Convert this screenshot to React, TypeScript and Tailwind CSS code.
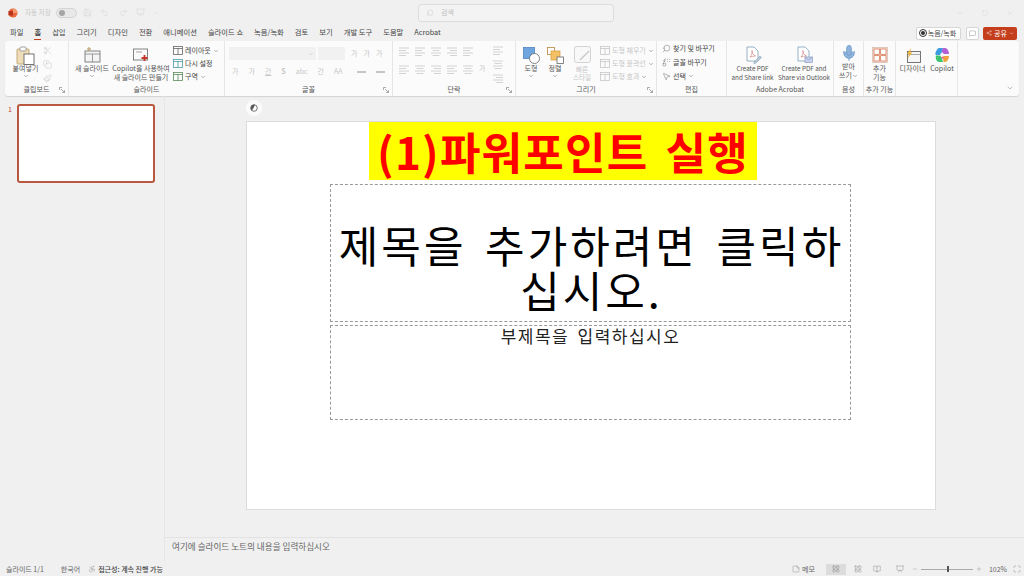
import type { ReactNode } from 'react'
import { ChevronDown, Minus, Plus, Search, Scissors, Copy, Paintbrush, X, Square, MousePointer2, Replace, MessageSquare, Share2, Mic, Undo2, Redo2, Save, Presentation, Accessibility, StickyNote, LayoutGrid, BookOpen, Maximize } from 'lucide-react'

const tabs = ['파일', '홈', '삽입', '그리기', '디자인', '전환', '애니메이션', '슬라이드 쇼', '녹음/녹화', '검토', '보기', '개발 도구', '도움말', 'Acrobat']

function Caret({ className = '' }: { className?: string }) {
  return <ChevronDown size={6} strokeWidth={2} className={`text-[#666] ${className}`} />
}

function Launcher() {
  return (
    <svg width="6" height="6" viewBox="0 0 6 6" className="text-[#888]" fill="none" stroke="currentColor" strokeWidth="0.7">
      <path d="M0.5 3V0.5H3M2 2L5.5 5.5M5.5 3.2V5.5H3.2" />
    </svg>
  )
}

function Group({ width, label, launcher, children, last }: { width: number; label: string; launcher?: boolean; children: ReactNode; last?: boolean }) {
  return (
    <div style={{ width }} className={`relative flex shrink-0 flex-col ${last ? '' : 'border-r border-[#e6e6e6]'}`}>
      <div className="flex min-h-0 flex-1">{children}</div>
      <div className="flex h-[13px] items-center justify-center pb-[1px] text-[7px] leading-none text-[#555]">{label}</div>
      {launcher && (
        <div className="absolute bottom-[3px] right-[3px]">
          <Launcher />
        </div>
      )}
    </div>
  )
}

function SmallRow({ icon, text, muted, caret }: { icon: ReactNode; text: string; muted?: boolean; caret?: boolean }) {
  return (
    <div className={`flex h-[14px] items-center gap-[2px] whitespace-nowrap text-[7px] leading-none ${muted ? 'text-[#c6c6c6]' : 'text-[#444]'}`}>
      {icon}
      <span>{text}</span>
      {caret && <Caret />}
    </div>
  )
}

function LayoutIcon({ color = '#666' }: { color?: string }) {
  return (
    <svg width="10" height="9" viewBox="0 0 10 9" fill="none" stroke={color} strokeWidth="0.8">
      <rect x="0.5" y="0.5" width="9" height="8" />
      <path d="M0.5 2.5H9.5M5 2.5V8.5" />
    </svg>
  )
}

function FakeGlyph({ text, className = '' }: { text: string; className?: string }) {
  return <span className={`text-[7px] leading-none text-[#c6c6c6] ${className}`}>{text}</span>
}

function LineIcon({ align = 'left' }: { align?: 'left' | 'center' | 'right' }) {
  const d = align === 'left' ? 'M0 1H10M0 3.5H7M0 6H10M0 8.5H7' : align === 'center' ? 'M0 1H10M1.5 3.5H8.5M0 6H10M1.5 8.5H8.5' : 'M0 1H10M3 3.5H10M0 6H10M3 8.5H10'
  return (
    <svg width="10" height="9" viewBox="0 0 10 9" fill="none" stroke="#c9c9c9" strokeWidth="0.8">
      <path d={d} />
    </svg>
  )
}

function PdfIcon({ mail }: { mail?: boolean }) {
  return (
    <svg width="18" height="18" viewBox="0 0 18 18" fill="none">
      <path d="M3 1H10L14 5V15H3Z" fill="#fff" stroke="#7f9fb8" strokeWidth="0.8" />
      <path d="M6 11C8 9 8.5 6 8 4.5C7.5 6 9 9 11.5 10C9.5 10 7.5 10.5 6 11Z" stroke="#c25b5b" strokeWidth="0.5" />
      {mail ? (
        <g>
          <rect x="10" y="11" width="7.5" height="5.5" fill="#c8d3ec" stroke="#7f8fc0" strokeWidth="0.6" />
          <path d="M10 11L13.7 14L17.5 11" stroke="#7f8fc0" strokeWidth="0.6" />
        </g>
      ) : (
        <g>
          <path d="M10 16L16 10L17.5 11.5L11.5 17.2L9.8 17.5Z" fill="#b9c7d3" stroke="#7f9fb8" strokeWidth="0.5" />
        </g>
      )}
    </svg>
  )
}

function ClipboardIcon() {
  return (
    <svg width="19" height="19" viewBox="0 0 19 19" fill="none">
      <rect x="1" y="3" width="12" height="15" rx="1" fill="#efdcb8" stroke="#b9975f" strokeWidth="0.8" />
      <rect x="4" y="1" width="6" height="4" rx="1" fill="#fff" stroke="#8a8a8a" strokeWidth="0.8" />
      <rect x="8" y="8" width="10" height="10.5" fill="#fff" stroke="#666" strokeWidth="0.9" />
    </svg>
  )
}

function NewSlideIcon() {
  return (
    <svg width="17" height="16" viewBox="0 0 17 16" fill="none">
      <rect x="1" y="4" width="15" height="11" fill="#f4f4f4" stroke="#777" strokeWidth="0.9" />
      <path d="M1 7H16M8.5 7V15" stroke="#777" strokeWidth="0.7" />
      <path d="M5 0V4M3 2H7" stroke="#b9975f" strokeWidth="1" />
    </svg>
  )
}

function CopilotSlideIcon() {
  return (
    <svg width="17" height="15" viewBox="0 0 17 15" fill="none">
      <rect x="0.5" y="1" width="14" height="11" fill="#fafafa" stroke="#777" strokeWidth="0.9" />
      <path d="M3 4H9" stroke="#999" strokeWidth="0.9" />
      <path d="M11.5 7V13M8.5 10H14.5" stroke="#c9342a" strokeWidth="1.8" />
    </svg>
  )
}

function ShapesIcon() {
  return (
    <svg width="17" height="17" viewBox="0 0 17 17" fill="none">
      <rect x="0.5" y="0.5" width="11" height="11" fill="#6fa5df" stroke="#3f78b5" strokeWidth="0.7" />
      <circle cx="11.5" cy="11.5" r="5" fill="#fff" stroke="#666" strokeWidth="0.8" />
    </svg>
  )
}

function ArrangeIcon() {
  return (
    <svg width="17" height="17" viewBox="0 0 17 17" fill="none">
      <rect x="0.5" y="0.5" width="7" height="7" fill="#fff" stroke="#b8873f" strokeWidth="0.8" />
      <rect x="4" y="4" width="9" height="9" fill="#f4c265" stroke="#d79c3a" strokeWidth="0.7" />
      <rect x="10" y="10" width="6.5" height="6.5" fill="#fff" stroke="#666" strokeWidth="0.8" />
    </svg>
  )
}

function QuickStyleIcon() {
  return (
    <svg width="17" height="17" viewBox="0 0 17 17" fill="none">
      <rect x="0.5" y="0.5" width="16" height="16" rx="2" fill="#f8f8f8" stroke="#c9c9c9" strokeWidth="0.8" />
      <path d="M6 14L15 5" stroke="#c9c9c9" strokeWidth="1.4" />
    </svg>
  )
}

function AddInIcon() {
  return (
    <svg width="16" height="16" viewBox="0 0 16 16" fill="none">
      <rect x="0.5" y="0.5" width="15" height="15" fill="#f8e3da" stroke="#c9ad9f" strokeWidth="0.6" />
      <rect x="2" y="2" width="5.3" height="5.3" fill="#fff" stroke="#d0683f" strokeWidth="0.7" />
      <rect x="8.7" y="2" width="5.3" height="5.3" fill="#fff" stroke="#d0683f" strokeWidth="0.7" />
      <rect x="2" y="8.7" width="5.3" height="5.3" fill="#fff" stroke="#d0683f" strokeWidth="0.7" />
      <rect x="8.7" y="8.7" width="5.3" height="5.3" fill="#fff" stroke="#d0683f" strokeWidth="0.7" />
    </svg>
  )
}

function DesignerIcon() {
  return (
    <svg width="16" height="15" viewBox="0 0 16 15" fill="none">
      <rect x="2.5" y="3.5" width="13" height="11" fill="#f6f6f6" stroke="#666" strokeWidth="0.9" />
      <path d="M2.5 6.5H15.5" stroke="#888" strokeWidth="0.7" />
      <path d="M6 0L2 6H4.2L2.6 10.5L7.5 4.5H5.2Z" fill="#efb73e" />
    </svg>
  )
}

function CopilotIcon() {
  return (
    <svg width="16" height="16" viewBox="0 0 16 16">
      <path d="M5 1H9L7 8H2.5C1 8 1 6 2 4.5C3 2.5 4 1 5 1Z" fill="#3b9be0" />
      <path d="M9 1H11C13 1 15 4 15 7H9.5L7.5 4Z" fill="#b45fd6" />
      <path d="M2 8.5H7L9 15H5C3 15 1 11.5 2 8.5Z" fill="#3ec46d" />
      <path d="M9 9H15C14.8 12 13 15 11 15H9.5Z" fill="#f0a23c" />
      <path d="M7 9L9 9L10 12L7.5 11Z" fill="#e8567c" />
      <circle cx="8" cy="8" r="1.9" fill="#f5f5f5" />
    </svg>
  )
}

function PptLogo() {
  return (
    <svg width="10" height="10" viewBox="0 0 10 10">
      <circle cx="5" cy="5" r="4.5" fill="#e8673f" />
      <path d="M5 .5A4.5 4.5 0 0 1 9.5 5H5Z" fill="#f49a6e" />
      <rect x="0.5" y="3" width="4.5" height="4.5" rx="0.6" fill="#b5341a" />
    </svg>
  )
}

function BigButton({ width, icon, lines, caret, small }: { width: number; icon: ReactNode; lines: string[]; caret?: boolean; small?: boolean }) {
  return (
    <div style={{ width }} className="flex shrink-0 flex-col items-center pt-[5px]">
      <div className="flex h-[18px] items-center justify-center">{icon}</div>
      <div className={`text-center leading-[9px] whitespace-nowrap text-[#555] ${small ? 'text-[6.3px]' : 'text-[7px]'}`}>
        {lines.map(l => (
          <div key={l}>{l}</div>
        ))}
      </div>
      {caret && <Caret />}
    </div>
  )
}

export default function App() {
  return (
    <div className="flex h-[576px] w-[1024px] flex-col overflow-hidden bg-[#f0f0f0] font-['Noto_Sans_CJK_KR','Liberation_Sans',sans-serif]">
      {/* Title bar */}
      <div className="flex h-[25px] shrink-0 items-center pr-[9px] pl-[8px]">
        <div className="flex w-[410px] items-center text-[#c8c8c8]">
          <PptLogo />
          <span className="ml-[7px] text-[6.6px] leading-none whitespace-nowrap">자동 저장</span>
          <div className="ml-[5px] flex h-[10px] w-[21px] items-center rounded-full border border-[#d4d4d4] bg-[#e8e8e8] pl-[2px]">
            <div className="h-[6px] w-[6px] rounded-full bg-[#a5a5a5]" />
          </div>
          <Save size={9} strokeWidth={1} className="ml-[6px]" />
          <Undo2 size={9} strokeWidth={1} className="ml-[8px]" />
          <Redo2 size={9} strokeWidth={1} className="ml-[10px]" />
          <Presentation size={9} strokeWidth={1} className="ml-[8px]" />
          <ChevronDown size={6} strokeWidth={1.2} className="ml-[8px]" />
        </div>
        <div className="flex h-[18px] w-[196px] items-center gap-[4px] rounded-[3px] border border-[#dcdcdc] bg-[#f3f3f3] pl-[7px] text-[7px] leading-none text-[#bdbdbd]">
          <Search size={8} strokeWidth={1.2} className="-scale-x-100" />
          <span className="ml-[3px]">검색</span>
        </div>
        <div className="ml-auto flex items-center gap-[18px] pr-[1px] text-[#cfcfcf]">
          <Minus size={8} strokeWidth={1} />
          <Square size={6} strokeWidth={1} />
          <X size={8} strokeWidth={1} />
        </div>
      </div>

      {/* Tabs */}
      <div className="flex h-[16px] shrink-0 items-center pr-[7px] pl-[10px] text-[7.3px] leading-none text-[#444]">
        <div className="flex gap-[11px]">
          {tabs.map(t => (
            <div key={t} className={`relative whitespace-nowrap ${t === '홈' ? 'font-bold' : ''}`}>
              {t}
              {t === '홈' && <div className="absolute right-0 -bottom-[3px] left-0 h-[1px] bg-[#c43e1c]" />}
            </div>
          ))}
        </div>
        <div className="ml-auto flex items-center">
          <div className="flex h-[13px] w-[45px] items-center justify-center gap-[2px] rounded-[2px] border border-[#d5d5d5] bg-white text-[7px]">
            <div className="h-[4px] w-[4px] rounded-full bg-[#333] outline outline-[0.5px] outline-offset-1 outline-[#333]" />
            <span className="ml-[1px] whitespace-nowrap">녹음/녹화</span>
          </div>
          <div className="ml-[5px] flex h-[13px] w-[13px] items-center justify-center rounded-[2px] border border-[#d5d5d5] bg-white">
            <MessageSquare size={7} strokeWidth={1} />
          </div>
          <div className="ml-[4px] flex h-[13px] w-[34px] items-center justify-center gap-[2px] rounded-[2px] bg-[#c43e1c] text-[7px] whitespace-nowrap text-white">
            <Share2 size={6} strokeWidth={1.2} />
            <span>공유</span>
            <ChevronDown size={5} strokeWidth={2} />
          </div>
        </div>
      </div>

      {/* Ribbon */}
      <div className="mx-[5px] flex h-[55px] shrink-0 rounded-[3px] bg-[#fbfbfb] shadow-[0_1px_1px_rgba(0,0,0,0.12)]">
        <Group width={64} label="클립보드" launcher>
          <div className="flex pl-[3px]">
            <BigButton width={35} icon={<ClipboardIcon />} lines={['붙여넣기']} caret />
            <div className="flex flex-col items-center gap-[5px] pt-[5px] text-[#aaa]">
              <Scissors size={9} strokeWidth={0.9} />
              <Copy size={9} strokeWidth={0.9} />
              <Paintbrush size={9} strokeWidth={0.9} />
            </div>
          </div>
        </Group>
        <Group width={156} label="슬라이드">
          <div className="flex pl-[3px]">
            <BigButton width={40} icon={<NewSlideIcon />} lines={['새 슬라이드']} caret />
            <BigButton width={58} icon={<CopilotSlideIcon />} lines={['Copilot을 사용하여', '새 슬라이드 만들기']} />
            <div className="flex flex-col pt-[3px] pl-[3px]">
              <SmallRow icon={<LayoutIcon />} text="레이아웃" caret />
              <SmallRow icon={<LayoutIcon color="#4a9aa5" />} text="다시 설정" />
              <SmallRow icon={<LayoutIcon color="#5a8a5a" />} text="구역" caret />
            </div>
          </div>
        </Group>
        <Group width={168} label="글꼴" launcher>
          <div className="flex flex-col gap-[8px] pt-[6px] pl-[4px]">
            <div className="flex gap-[2px]">
              <div className="flex h-[13px] w-[87px] items-center justify-end bg-[#f1f1f1] pr-[2px]">
                <Caret className="opacity-40" />
              </div>
              <div className="h-[13px] w-[27px] bg-[#f1f1f1]" />
              <div className="flex items-center gap-[6px] pl-[4px]">
                <FakeGlyph text="가" />
                <FakeGlyph text="가" />
                <FakeGlyph text="가" />
              </div>
            </div>
            <div className="flex items-center gap-[10px] pl-[3px]">
              <FakeGlyph text="가" />
              <FakeGlyph text="가" />
              <FakeGlyph text="간" className="underline" />
              <FakeGlyph text="S" className="font-bold" />
              <FakeGlyph text="abc" />
              <FakeGlyph text="간" />
              <FakeGlyph text="AA" />
              <span className="ml-[4px] h-[2px] w-[9px] bg-[#c6c6c6]" />
              <span className="h-[2px] w-[9px] bg-[#c6c6c6]" />
            </div>
          </div>
        </Group>
        <Group width={123} label="단락" launcher>
          <div className="flex flex-col gap-[9px] pt-[6px] pl-[6px]">
            <div className="flex gap-[6px]">
              <LineIcon />
              <LineIcon />
              <LineIcon align="center" />
              <LineIcon align="right" />
              <LineIcon />
            </div>
            <div className="flex gap-[6px]">
              <LineIcon />
              <LineIcon align="center" />
              <LineIcon align="right" />
              <LineIcon />
              <LineIcon align="center" />
              <FakeGlyph text="가" />
            </div>
          </div>
          <div className="flex flex-col gap-[5px] pt-[5px] pl-[8px]">
            <LineIcon />
            <LineIcon align="center" />
            <LineIcon align="right" />
          </div>
        </Group>
        <Group width={141} label="그리기" launcher>
          <div className="flex pl-[3px]">
            <BigButton width={24} icon={<ShapesIcon />} lines={['도형']} caret />
            <BigButton width={24} icon={<ArrangeIcon />} lines={['정렬']} caret />
            <div className="ml-[2px] flex w-[26px] flex-col items-center pt-[5px] text-center text-[6.5px] leading-[8px] whitespace-nowrap text-[#c6c6c6]">
              <QuickStyleIcon />
              <span className="mt-[2px]">빠른</span>
              <span>스타일</span>
            </div>
            <div className="flex flex-col pt-[3px] pl-[5px]">
              <SmallRow muted icon={<LayoutIcon color="#c6c6c6" />} text="도형 채우기" caret />
              <SmallRow muted icon={<LayoutIcon color="#c6c6c6" />} text="도형 윤곽선" caret />
              <SmallRow muted icon={<LayoutIcon color="#c6c6c6" />} text="도형 효과" caret />
            </div>
          </div>
        </Group>
        <Group width={70} label="편집">
          <div className="flex flex-col pt-[1px] pl-[5px]">
            <SmallRow icon={<Search size={9} strokeWidth={1} className="-scale-x-100" />} text="찾기 및 바꾸기" />
            <SmallRow icon={<Replace size={9} strokeWidth={1} />} text="글꼴 바꾸기" />
            <SmallRow icon={<MousePointer2 size={9} strokeWidth={1} />} text="선택" caret />
          </div>
        </Group>
        <Group width={107} label="Adobe Acrobat">
          <BigButton width={51} small icon={<PdfIcon />} lines={['Create PDF', 'and Share link']} />
          <BigButton width={52} small icon={<PdfIcon mail />} lines={['Create PDF and', 'Share via Outlook']} />
        </Group>
        <Group width={30} label="음성">
          <div className="flex w-full flex-col items-center pt-[3px]">
            <Mic size={18} strokeWidth={1.2} className="fill-[#8fb4dc] text-[#6f9bc8]" />
            <div className="text-center text-[7px] leading-[9px] whitespace-nowrap text-[#555]">
              <div>받아</div>
              <div className="flex items-center">
                쓰기 <Caret />
              </div>
            </div>
          </div>
        </Group>
        <Group width={32} label="추가 기능">
          <BigButton width={31} icon={<AddInIcon />} lines={['추가', '기능']} />
        </Group>
        <Group width={62} label="">
          <BigButton width={33} icon={<DesignerIcon />} lines={['디자이너']} />
          <BigButton width={26} icon={<CopilotIcon />} lines={['Copilot']} />
        </Group>
        <div className="flex flex-1 items-end justify-end pr-[5px] pb-[4px]">
          <ChevronDown size={8} strokeWidth={1.2} className="text-[#666]" />
        </div>
      </div>

      {/* Main */}
      <div className="flex min-h-0 flex-1">
        <div className="flex w-[165px] shrink-0 gap-[5px] border-r border-[#e6e6e6] pt-[8px] pl-[8px]">
          <span className="text-[7px] leading-[10px] text-[#c43e1c]">1</span>
          <div className="h-[79px] w-[138px] rounded-[3px] border-2 border-[#b9583f] bg-white" />
        </div>
        <div className="flex min-w-0 flex-1 flex-col">
          <div className="flex min-h-0 flex-1 items-start pt-[4px] pl-[81px]">
            <div className="flex h-[16px] w-[16px] items-center justify-center rounded-full bg-[#fbfbfb]">
              <svg width="8" height="8" viewBox="0 0 8 8" fill="none">
                <circle cx="4" cy="4" r="3.3" stroke="#555" strokeWidth="0.8" />
                <path d="M4 0.7A3.3 3.3 0 0 0 2 6.6L5 1Z" fill="#555" />
              </svg>
            </div>
            <div className="mt-[21px] -ml-[16px] flex h-[389px] w-[690px] flex-col border border-[#dcdcdc] bg-white">
              <div className="ml-[122px] flex h-[58px] w-[388px] items-center justify-center bg-[#ffff00] text-[44px] leading-none font-bold tracking-[1.2px] whitespace-nowrap text-[#ff0000] [word-spacing:6px]">
                (1)파워포인트 실행
              </div>
              <div className="mt-[4px] ml-[83px] flex h-[138px] w-[521px] flex-col justify-end border border-dashed border-[#999] pb-[9px] pl-[2px] text-center text-[43px] leading-[45px] tracking-[3px] text-black [word-spacing:6px]">
                제목을 추가하려면 클릭하십시오.
              </div>
              <div className="mt-[3px] ml-[83px] h-[95px] w-[521px] border border-dashed border-[#999] text-center text-[17px] leading-[20px] tracking-[1.5px] text-[#222] [word-spacing:3px]">
                부제목을 입력하십시오
              </div>
            </div>
          </div>
          <div className="flex h-[25px] shrink-0 items-start border-t border-[#e2e2e2] pt-[3px] pl-[7px] text-[8.6px] leading-[10px] text-[#666]">
            여기에 슬라이드 노트의 내용을 입력하십시오
          </div>
        </div>
      </div>

      {/* Status bar */}
      <div className="flex h-[14px] shrink-0 items-center pr-[3px] pl-[6px] text-[7px] leading-none whitespace-nowrap text-[#666]">
        <span>슬라이드 1/1</span>
        <span className="ml-[17px]">한국어</span>
        <Accessibility size={8} strokeWidth={1} className="ml-[8px]" />
        <span className="ml-[2px] font-medium text-[#444]">접근성: 계속 진행 가능</span>
        <div className="ml-auto flex items-center">
          <StickyNote size={8} strokeWidth={1} />
          <span className="mr-[11px] ml-[2px]">메모</span>
          <div className="flex h-[11px] w-[20px] items-center justify-center bg-[#dcdcdc]">
            <LayoutGrid size={8} strokeWidth={1} />
          </div>
          <LayoutGrid size={8} strokeWidth={1} className="ml-[8px]" />
          <BookOpen size={8} strokeWidth={1} className="ml-[11px]" />
          <Presentation size={8} strokeWidth={1} className="ml-[15px]" />
          <Minus size={6} strokeWidth={1} className="ml-[8px]" />
          <div className="relative mx-[3px] h-[1px] w-[52px] bg-[#aaa]">
            <div className="absolute -top-[2.5px] left-[26px] h-[6px] w-[2px] bg-[#555]" />
          </div>
          <Plus size={6} strokeWidth={1} />
          <span className="ml-[7px]">102%</span>
          <Maximize size={8} strokeWidth={1} className="ml-[6px]" />
        </div>
      </div>
    </div>
  )
}
